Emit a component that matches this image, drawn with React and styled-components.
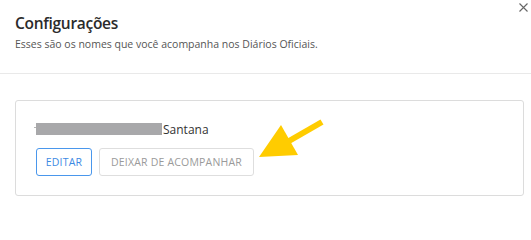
import React from 'react';
import styled, { createGlobalStyle } from 'styled-components';

const GlobalStyle = createGlobalStyle`
  html, body {
    margin: 0;
    padding: 0;
    background: #fff;
    font-family: "Open Sans", "Noto Sans", sans-serif;
  }
`;

const Modal = styled.div`
  position: relative;
  width: 531px;
  height: 205px;
  background: #fff;
  overflow: hidden;
`;

const Header = styled.div`
  padding: 13px 15px 0 15px;
  height: 60px;
  border-bottom: 1px solid #e9e9e9;
`;

const Title = styled.h2`
  margin: 0;
  font-size: 15.5px;
  line-height: 20px;
  font-weight: 600;
  letter-spacing: -0.3px;
  color: #2b2b2b;
`;

const Subtitle = styled.p`
  margin: 4px 0 0 0;
  font-size: 10.5px;
  line-height: 15px;
  color: #555;
`;

const Close = styled.button`
  position: absolute;
  top: 1px;
  right: 2px;
  border: 0;
  background: none;
  padding: 0;
  width: 12px;
  height: 12px;
  display: flex;
  align-items: center;
  justify-content: center;
  cursor: pointer;
`;

const Body = styled.div`
  padding: 26px 7px 0 15px;
`;

const Card = styled.div`
  border: 1px solid #dcdcdc;
  border-radius: 3px;
  padding: 20px 20px 19px 20px;
`;

const NameRow = styled.div`
  display: flex;
  align-items: center;
  height: 16px;
  margin-bottom: 11px;
`;

const Redacted = styled.span`
  position: relative;
  display: inline-block;
  width: 126px;
  height: 12px;
  background: #a8a8aa;
  margin-right: 1px;

  &::before {
    content: '';
    position: absolute;
    left: -2px;
    top: 4px;
    width: 2px;
    height: 1px;
    background: #b5b5b5;
  }
`;

const Name = styled.span`
  font-size: 12px;
  font-weight: 500;
  color: #333;
`;

const Actions = styled.div`
  display: flex;
  gap: 7px;
`;

const Button = styled.button`
  font-family: inherit;
  width: ${p => p.$width}px;
  height: 28px;
  padding: 0;
  font-size: 10.5px;
  letter-spacing: 0.2px;
  background: #fff;
  border-radius: 3px;
  border: 1px solid ${p => (p.$primary ? '#4a97ec' : '#dedede')};
  color: ${p => (p.$primary ? '#3d8ae3' : '#9a9a9a')};
  text-transform: uppercase;
  cursor: pointer;
`;

const Arrow = styled.svg`
  position: absolute;
  left: 255px;
  top: 118px;
`;

export default function App() {
  return (
    <>
      <GlobalStyle />
      <Modal>
        <Header>
          <Title>Configurações</Title>
          <Subtitle>Esses são os nomes que você acompanha nos Diários Oficiais.</Subtitle>
        </Header>
        <Close aria-label="Fechar">
          <svg width="9" height="9" viewBox="0 0 9 9">
            <path d="M0.5 0.5 L8.5 8.5 M8.5 0.5 L0.5 8.5" stroke="#666" strokeWidth="1.1" />
          </svg>
        </Close>
        <Body>
          <Card>
            <NameRow>
              <Redacted />
              <Name>Santana</Name>
            </NameRow>
            <Actions>
              <Button $primary $width={56}>Editar</Button>
              <Button $width={155}>Deixar de acompanhar</Button>
            </Actions>
          </Card>
        </Body>
        <Arrow width="72" height="44" viewBox="0 0 72 44">
          <polygon points="4,39 26,7 43,37" fill="#ffcc00" />
          <line x1="34" y1="23" x2="67" y2="4" stroke="#ffcc00" strokeWidth="6" />
        </Arrow>
      </Modal>
    </>
  );
}
